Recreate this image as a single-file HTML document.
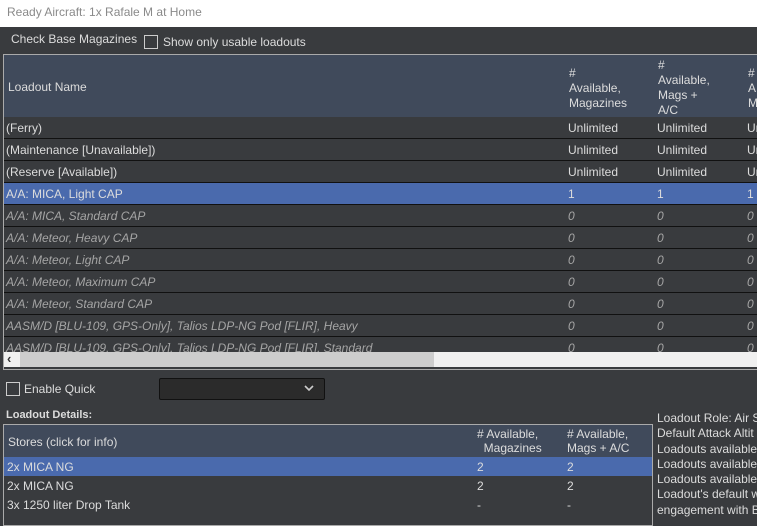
<!DOCTYPE html><html><head><style>
body{margin:0;width:757px;height:520px;overflow:hidden;background:#393b3e;font-family:"Liberation Sans",sans-serif;font-size:12px;color:#dcdcdc;position:relative}
.a{position:absolute;white-space:nowrap}
.row{position:absolute;left:4px;width:753px;height:21px;border-bottom:1px solid #111;background:#393b3e}
.row span{position:absolute;top:4px}
.i{font-style:italic;color:#a5a5a5}
.sel{background:#4a6aad}
</style></head><body>
<div class="a" style="left:0;top:0;width:757px;height:27px;background:#fff"></div>
<div class="a" style="left:7px;top:5px;color:#8a8a8a">Ready Aircraft: 1x Rafale M at Home</div>
<div class="a" style="left:11px;top:32px">Check Base Magazines</div>
<div class="a" style="left:144px;top:35px;width:12px;height:12px;border:1px solid #ccc"></div>
<div class="a" style="left:163px;top:35px">Show only usable loadouts</div>
<div class="a" style="left:3px;top:54px;width:754px;height:314px;border-top:1px solid #aaa;border-left:1px solid #aaa;border-bottom:1px solid #aaa"></div>
<div class="a" style="left:4px;top:55px;width:753px;height:62px;background:#404a5b"></div>
<div class="a" style="left:8px;top:80px">Loadout Name</div>
<div class="a" style="left:569px;top:66px;line-height:15px;color:#ddd">#<br>Available,<br>Magazines</div>
<div class="a" style="left:658px;top:58px;line-height:15px;color:#ddd">#<br>Available,<br>Mags +<br>A/C</div>
<div class="a" style="left:748px;top:66px;line-height:15px;color:#ddd">#<br>A<br>M</div>
<div class="row" style="top:117px"><span style="left:2px">(Ferry)</span><span style="left:564px">Unlimited</span><span style="left:653px">Unlimited</span><span style="left:743px">Un</span></div>
<div class="row" style="top:139px"><span style="left:2px">(Maintenance [Unavailable])</span><span style="left:564px">Unlimited</span><span style="left:653px">Unlimited</span><span style="left:743px">Un</span></div>
<div class="row" style="top:161px"><span style="left:2px">(Reserve [Available])</span><span style="left:564px">Unlimited</span><span style="left:653px">Unlimited</span><span style="left:743px">Un</span></div>
<div class="row sel" style="top:183px"><span style="left:2px">A/A: MICA, Light CAP</span><span style="left:564px">1</span><span style="left:653px">1</span><span style="left:743px">1</span></div>
<div class="row i" style="top:205px"><span style="left:2px">A/A: MICA, Standard CAP</span><span style="left:564px">0</span><span style="left:653px">0</span><span style="left:743px">0</span></div>
<div class="row i" style="top:227px"><span style="left:2px">A/A: Meteor, Heavy CAP</span><span style="left:564px">0</span><span style="left:653px">0</span><span style="left:743px">0</span></div>
<div class="row i" style="top:249px"><span style="left:2px">A/A: Meteor, Light CAP</span><span style="left:564px">0</span><span style="left:653px">0</span><span style="left:743px">0</span></div>
<div class="row i" style="top:271px"><span style="left:2px">A/A: Meteor, Maximum CAP</span><span style="left:564px">0</span><span style="left:653px">0</span><span style="left:743px">0</span></div>
<div class="row i" style="top:293px"><span style="left:2px">A/A: Meteor, Standard CAP</span><span style="left:564px">0</span><span style="left:653px">0</span><span style="left:743px">0</span></div>
<div class="row i" style="top:315px"><span style="left:2px">AASM/D [BLU-109, GPS-Only], Talios LDP-NG Pod [FLIR], Heavy</span><span style="left:564px">0</span><span style="left:653px">0</span><span style="left:743px">0</span></div>
<div class="row i" style="top:337px;height:15px;overflow:hidden;border:0"><span style="left:2px">AASM/D [BLU-109, GPS-Only], Talios LDP-NG Pod [FLIR], Standard</span><span style="left:564px">0</span><span style="left:653px">0</span><span style="left:743px">0</span></div>
<div class="a" style="left:4px;top:352px;width:753px;height:15px;background:#f0f0f0"></div>
<div class="a" style="left:20px;top:352px;width:414px;height:15px;background:#cdcdcd"></div>
<div class="a" style="left:7px;top:351px;color:#333;font-size:13px;font-weight:bold">&lsaquo;</div>
<div class="a" style="left:6px;top:382px;width:12px;height:12px;border:1px solid #ccc"></div>
<div class="a" style="left:24px;top:382px">Enable Quick</div>
<div class="a" style="left:159px;top:378px;width:164px;height:20px;background:#2b2b2b;border:1px solid #111;border-radius:2px"></div>
<svg class="a" style="left:304px;top:385px" width="10" height="7"><path d="M1 1L5 5L9 1" stroke="#ccc" stroke-width="1.6" fill="none"/></svg>
<div class="a" style="left:6px;top:409px;font-weight:bold;font-size:11px">Loadout Details:</div>
<div class="a" style="left:3px;top:424px;width:648px;height:100px;border:1px solid #aaa"></div>
<div class="a" style="left:4px;top:425px;width:648px;height:32px;background:#404a5b"></div>
<div class="a" style="left:8px;top:435px">Stores (click for info)</div>
<div class="a" style="left:477px;top:427px;line-height:14px;color:#ddd"># Available,<br>&nbsp;&nbsp;Magazines</div>
<div class="a" style="left:567px;top:427px;line-height:14px;color:#ddd"># Available,<br>Mags + A/C</div>
<div class="a" style="left:4px;top:457px;width:648px;height:19px;background:#4a6aad"></div>
<div class="a" style="left:7px;top:460px">2x MICA NG</div><div class="a" style="left:477px;top:460px">2</div><div class="a" style="left:567px;top:460px">2</div>
<div class="a" style="left:7px;top:479px">2x MICA NG</div><div class="a" style="left:477px;top:479px">2</div><div class="a" style="left:567px;top:479px">2</div>
<div class="a" style="left:7px;top:498px">3x 1250 liter Drop Tank</div><div class="a" style="left:477px;top:498px">-</div><div class="a" style="left:567px;top:498px">-</div>
<div class="a" style="left:657px;top:411px;line-height:15.3px">Loadout Role: Air S<br>Default Attack Altit<br>Loadouts available<br>Loadouts available,<br>Loadouts available,<br>Loadout's default w<br>engagement with B</div>
</body></html>
